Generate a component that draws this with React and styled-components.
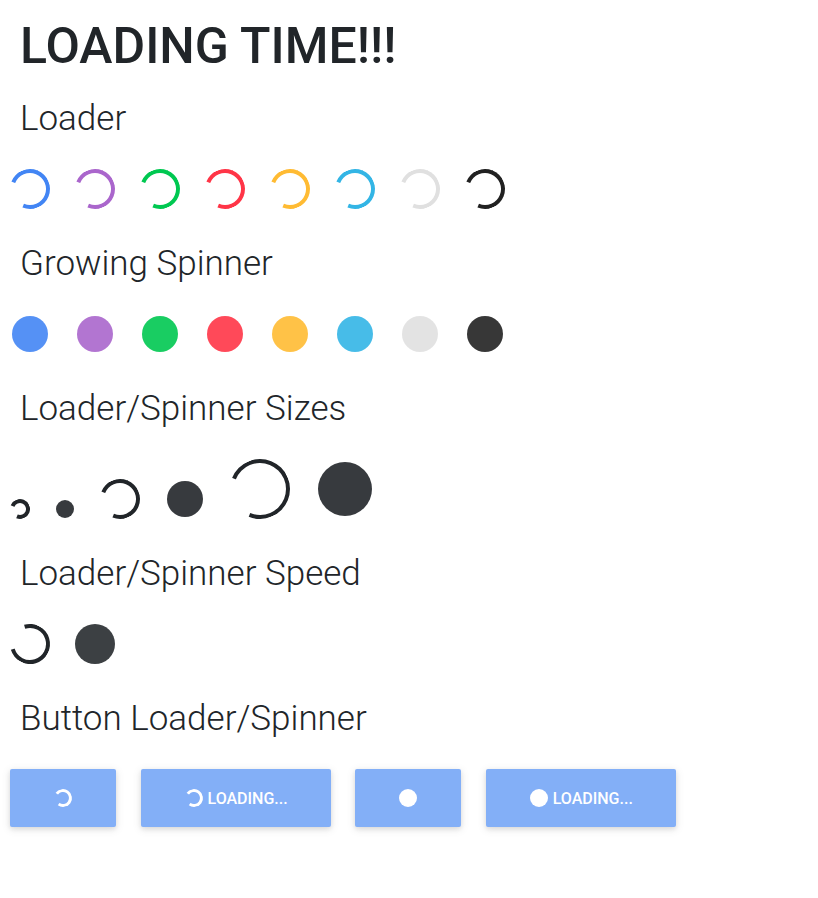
import React from "react";
import styled, { createGlobalStyle } from "styled-components";

const Global = createGlobalStyle`
  html, body { margin: 0; padding: 0; background: #fff; }
  body { font-family: Roboto, "Liberation Sans", sans-serif; color: #212529; }
  * { box-sizing: border-box; }
`;

const Page = styled.main`
  padding: 16px 10px 40px 10px;
  display: flex;
  flex-direction: column;
`;

const Heading = styled.h1`
  margin: 0 0 22px 10px;
  font-size: 50px;
  line-height: 60px;
  font-weight: 500;
  color: #212529;
`;

const Section = styled.section`
  display: flex;
  flex-direction: column;
  margin-bottom: 34px;
`;

const Title = styled.h2`
  margin: 0 0 29px 10px;
  font-size: 35px;
  line-height: 42px;
  font-weight: 300;
  color: #212529;
`;

const Row = styled.div`
  display: flex;
  align-items: ${(p) => (p.$bottom ? "flex-end" : "center")};
  gap: ${(p) => p.$gap || 25}px;
`;

const Ring = styled.span`
  display: inline-block;
  flex: none;
  width: ${(p) => p.$size}px;
  height: ${(p) => p.$size}px;
  border: ${(p) => p.$stroke || 4}px solid ${(p) => p.$color};
  border-left-color: transparent;
  border-radius: 50%;
  transform: rotate(${(p) => (p.$angle ?? -23)}deg);
`;

const GrowBox = styled.span`
  display: inline-flex;
  flex: none;
  align-items: center;
  justify-content: center;
  width: ${(p) => p.$size}px;
  height: ${(p) => p.$size}px;
`;

const Dot = styled.span`
  display: block;
  width: 100%;
  height: 100%;
  border-radius: 50%;
  background: ${(p) => p.$color};
  opacity: ${(p) => p.$opacity ?? 0.9};
  transform: scale(${(p) => p.$scale ?? 0.9});
`;

const Grow = ({ size, color, scale, opacity }) => (
  <GrowBox $size={size}>
    <Dot $color={color} $scale={scale} $opacity={opacity} />
  </GrowBox>
);

const Button = styled.button`
  display: inline-flex;
  align-items: center;
  justify-content: center;
  gap: 4px;
  height: 58px;
  padding: 0 43px;
  border: 0;
  border-radius: 2px;
  background: #4285f4;
  color: #fff;
  opacity: 0.65;
  box-shadow: 0 2px 5px 0 rgba(0, 0, 0, 0.16), 0 2px 10px 0 rgba(0, 0, 0, 0.12);
  font-family: Roboto, "Liberation Sans", sans-serif;
  font-size: 16px;
  font-weight: 500;
  text-transform: uppercase;
  cursor: default;
`;

const ButtonRing = styled(Ring)`
  margin: 0 1px;
`;

const colors = ["#4285f4", "#aa66cc", "#00c851", "#ff3547", "#ffbb33", "#33b5e5", "#e0e0e0", "#212121"];
const DARK = "#212529";

export default function App() {
  return (
    <>
      <Global />
      <Page>
        <Heading>LOADING TIME!!!</Heading>

        <Section>
          <Title>Loader</Title>
          <Row>
            {colors.map((c) => (
              <Ring key={c} $size={40} $color={c} />
            ))}
          </Row>
        </Section>

        <Section>
          <Title>Growing Spinner</Title>
          <Row>
            {colors.map((c) => (
              <Grow key={c} size={40} color={c} />
            ))}
          </Row>
        </Section>

        <Section>
          <Title>Loader/Spinner Sizes</Title>
          <Row $bottom>
            <Ring $size={20} $stroke={4} $color={DARK} />
            <Grow size={20} color={DARK} />
            <Ring $size={40} $color={DARK} />
            <Grow size={40} color={DARK} />
            <Ring $size={60} $color={DARK} />
            <Grow size={60} color={DARK} />
          </Row>
        </Section>

        <Section>
          <Title>Loader/Spinner Speed</Title>
          <Row>
            <Ring $size={40} $color={DARK} $angle={28} />
            <Grow size={40} color={DARK} scale={1} opacity={0.88} />
          </Row>
        </Section>

        <Section>
          <Title>Button Loader/Spinner</Title>
          <Row $gap={24.5}>
            <Button disabled>
              <ButtonRing $size={18} $stroke={3} $color="#fff" $angle={-10} />
            </Button>
            <Button disabled>
              <ButtonRing $size={18} $stroke={3} $color="#fff" $angle={-10} />
              Loading...
            </Button>
            <Button disabled>
              <Grow size={20} color="#fff" opacity={1} />
            </Button>
            <Button disabled>
              <Grow size={20} color="#fff" opacity={1} />
              Loading...
            </Button>
          </Row>
        </Section>
      </Page>
    </>
  );
}
